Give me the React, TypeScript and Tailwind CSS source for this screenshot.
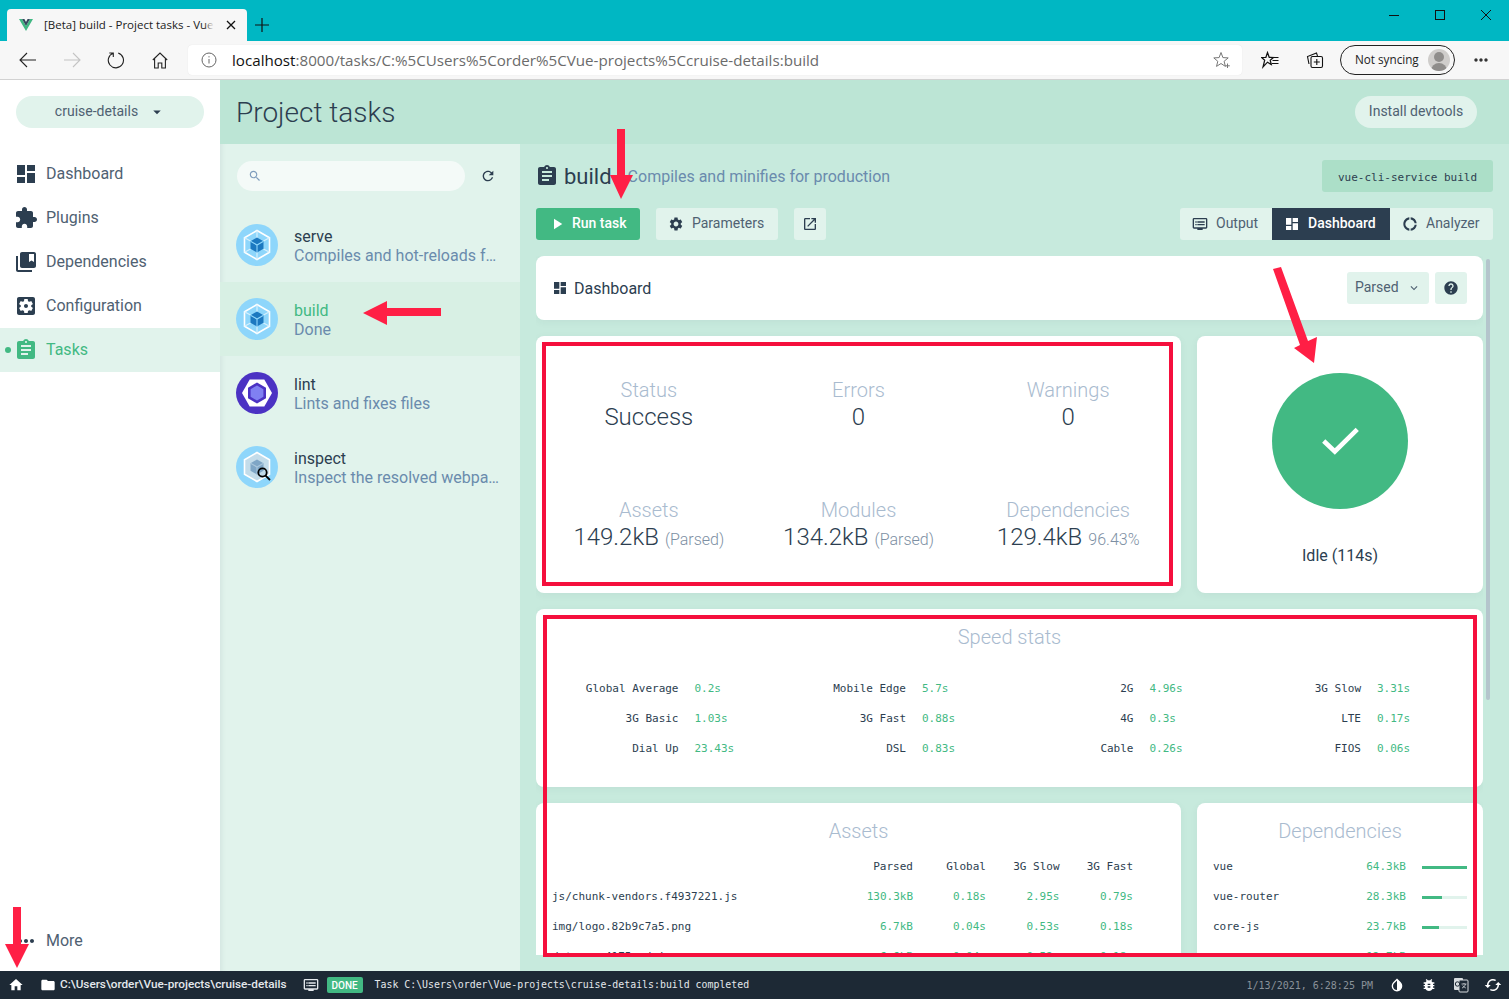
import React from "react";

const P = {
  dashboard: "M3 13h8V3H3v10zm0 8h8v-6H3v6zm10 0h8V11h-8v10zm0-18v6h8V3h-8z",
  extension: "M20.5 11H19V7c0-1.1-.9-2-2-2h-4V3.5C13 2.12 11.88 1 10.5 1S8 2.12 8 3.5V5H4c-1.1 0-1.99.9-1.99 2v3.8H3.5c1.49 0 2.7 1.21 2.7 2.7s-1.21 2.7-2.7 2.7H2V20c0 1.1.9 2 2 2h3.8v-1.5c0-1.49 1.21-2.7 2.7-2.7 1.49 0 2.7 1.21 2.7 2.7V22H17c1.1 0 2-.9 2-2v-4h1.5c1.38 0 2.5-1.12 2.5-2.5S21.88 11 20.5 11z",
  bookmarks: "M4 6H2v14c0 1.1.9 2 2 2h14v-2H4V6zm16-4H8c-1.1 0-2 .9-2 2v12c0 1.1.9 2 2 2h12c1.1 0 2-.9 2-2V4c0-1.1-.9-2-2-2zm0 10l-2.5-1.5L15 12V4h5v8z",
  config: "M12 10c-1.1 0-2 .9-2 2s.9 2 2 2 2-.9 2-2-.9-2-2-2zm7-7H5c-1.1 0-2 .9-2 2v14c0 1.1.9 2 2 2h14c1.1 0 2-.9 2-2V5c0-1.1-.9-2-2-2zm-1.75 9c0 .23-.02.46-.05.68l1.48 1.16c.13.11.17.3.08.45l-1.4 2.42c-.09.15-.27.21-.43.15l-1.74-.7c-.36.28-.76.51-1.18.69l-.26 1.85c-.03.17-.18.3-.35.3h-2.8c-.17 0-.32-.13-.35-.29l-.26-1.85c-.43-.18-.82-.41-1.18-.69l-1.74.7c-.16.06-.34 0-.43-.15l-1.4-2.42c-.09-.15-.05-.34.08-.45l1.48-1.16c-.03-.23-.05-.46-.05-.69 0-.23.02-.46.05-.68l-1.48-1.16c-.13-.11-.17-.3-.08-.45l1.4-2.42c.09-.15.27-.21.43-.15l1.74.7c.36-.28.76-.51 1.18-.69l.26-1.85c.03-.17.18-.3.35-.3h2.8c.17 0 .32.13.35.29l.26 1.85c.43.18.82.41 1.18.69l1.74-.7c.16-.06.34 0 .43.15l1.4 2.42c.09.15.05.34-.08.45l-1.48 1.16c.03.23.05.46.05.69z",
  assignment: "M19 3h-4.18C14.4 1.84 13.3 1 12 1c-1.3 0-2.4.84-2.82 2H5c-1.1 0-2 .9-2 2v14c0 1.1.9 2 2 2h14c1.1 0 2-.9 2-2V5c0-1.1-.9-2-2-2zm-7 0c.55 0 1 .45 1 1s-.45 1-1 1-1-.45-1-1 .45-1 1-1zm2 14H7v-2h7v2zm3-4H7v-2h10v2zm0-4H7V7h10v2z",
  gear: "M19.14 12.94c.04-.3.06-.61.06-.94 0-.32-.02-.64-.07-.94l2.03-1.58c.18-.14.23-.41.12-.61l-1.92-3.32c-.12-.22-.37-.29-.59-.22l-2.39.96c-.5-.38-1.03-.7-1.62-.94l-.36-2.54c-.04-.24-.24-.41-.48-.41h-3.84c-.24 0-.43.17-.47.41l-.36 2.54c-.59.24-1.13.57-1.62.94l-2.39-.96c-.22-.08-.47 0-.59.22L2.74 8.87c-.12.21-.08.47.12.61l2.03 1.58c-.05.3-.09.63-.09.94s.02.64.07.94l-2.03 1.58c-.18.14-.23.41-.12.61l1.92 3.32c.12.22.37.29.59.22l2.39-.96c.5.38 1.03.7 1.62.94l.36 2.54c.05.24.24.41.48.41h3.84c.24 0 .44-.17.47-.41l.36-2.54c.59-.24 1.13-.56 1.62-.94l2.39.96c.22.08.47 0 .59-.22l1.92-3.32c.12-.22.07-.47-.12-.61l-2.01-1.58zM12 15.6c-1.98 0-3.6-1.62-3.6-3.6s1.62-3.6 3.6-3.6 3.6 1.62 3.6 3.6-1.62 3.6-3.6 3.6z",
  open: "M19 19H5V5h7V3H5c-1.11 0-2 .9-2 2v14c0 1.1.89 2 2 2h14c1.1 0 2-.9 2-2v-7h-2v7zM14 3v2h3.59l-9.83 9.83 1.41 1.41L19 6.41V10h2V3h-7z",
  help: "M12 2C6.48 2 2 6.48 2 12s4.48 10 10 10 10-4.48 10-10S17.52 2 12 2zm1 17h-2v-2h2v2zm2.07-7.75l-.9.92C13.45 12.9 13 13.5 13 15h-2v-.5c0-1.1.45-2.1 1.17-2.83l1.24-1.26c.37-.36.59-.86.59-1.41 0-1.1-.9-2-2-2s-2 .9-2 2H8c0-2.21 1.79-4 4-4s4 1.79 4 4c0 .88-.36 1.68-.93 2.25z",
  home: "M10 20v-6h4v6h5v-8h3L12 3 2 12h3v8z",
  folder: "M10 4H4c-1.1 0-1.99.9-1.99 2L2 18c0 1.1.9 2 2 2h16c1.1 0 2-.9 2-2V8c0-1.1-.9-2-2-2h-8l-2-2z",
  bug: "M20 8h-2.81c-.45-.78-1.07-1.45-1.82-1.96L17 4.41 15.59 3l-2.17 2.17C12.96 5.06 12.49 5 12 5c-.49 0-.96.06-1.41.17L8.41 3 7 4.41l1.62 1.63C7.88 6.55 7.26 7.22 6.81 8H4v2h2.09c-.05.33-.09.66-.09 1v1H4v2h2v1c0 .34.04.67.09 1H4v2h2.81c1.04 1.79 2.97 3 5.19 3s4.15-1.21 5.19-3H20v-2h-2.09c.05-.33.09-.66.09-1v-1h2v-2h-2v-1c0-.34-.04-.67-.09-1H20V8zm-6 8h-4v-2h4v2zm0-4h-4v-2h4v2z",
  invert: "M17.66 7.93L12 2.27 6.34 7.93c-3.12 3.12-3.12 8.19 0 11.31C7.9 20.8 9.95 21.58 12 21.58c2.05 0 4.1-.78 5.66-2.34 3.12-3.12 3.12-8.19 0-11.31zM12 19.59c-1.6 0-3.11-.62-4.24-1.76C6.62 16.69 6 15.19 6 13.59s.62-3.11 1.76-4.24L12 5.1v14.49z",
  cached: "M19 8l-4 4h3c0 3.31-2.69 6-6 6-1.01 0-1.97-.25-2.8-.7l-1.46 1.46C8.97 19.54 10.43 20 12 20c4.42 0 8-3.58 8-8h3l-4-4zM6 12c0-3.31 2.69-6 6-6 1.01 0 1.97.25 2.8.7l1.46-1.46C15.03 4.46 13.57 4 12 4c-4.42 0-8 3.58-8 8H1l4 4 4-4H6z",
  refresh: "M17.65 6.35C16.2 4.9 14.21 4 12 4c-4.42 0-7.99 3.58-7.99 8s3.57 8 7.99 8c3.73 0 6.84-2.55 7.73-6h-2.08c-.82 2.33-3.04 4-5.65 4-3.31 0-6-2.69-6-6s2.69-6 6-6c1.66 0 3.14.69 4.22 1.78L13 11h7V4l-2.35 2.35z",
  donut: "M11 5.08V2c-5 .5-9 4.81-9 10s4 9.5 9 10v-3.08c-3-.48-6-3.19-6-6.92s3-6.44 6-6.92zM18.97 11H22c-.47-5-4-8.53-9-9v3.08C16 5.51 18.54 8 18.97 11zM13 18.92V22c5-.47 8.53-4 9-9h-3.03c-.43 3-2.97 5.49-5.97 5.92z",
  dvr: "M21 3H3c-1.1 0-2 .9-2 2v12c0 1.1.9 2 2 2h5v2h8v-2h5c1.1 0 1.99-.9 1.99-2L23 5c0-1.1-.9-2-2-2zm0 14H3V5h18v12zm-2-9H8v2h11V8zm0 4H8v2h11v-2zM7 8H5v2h2V8zm0 4H5v2h2v-2z",
  play: "M8 5v14l11-7z",
  drop: "M7 10l5 5 5-5z",
  expand: "M16.59 8.59L12 13.17 7.41 8.59 6 10l6 6 6-6z",
  search: "M15.5 14h-.79l-.28-.27C15.41 12.59 16 11.11 16 9.5 16 5.91 13.09 3 9.5 3S3 5.91 3 9.5 5.91 16 9.5 16c1.61 0 3.09-.59 4.23-1.57l.27.28v.79l5 4.99L20.49 19l-4.99-5zm-6 0C7.01 14 5 11.99 5 9.5S7.01 5 9.5 5 14 7.01 14 9.5 11.99 14 9.5 14z",
  more: "M6 10c-1.1 0-2 .9-2 2s.9 2 2 2 2-.9 2-2-.9-2-2-2zm12 0c-1.1 0-2 .9-2 2s.9 2 2 2 2-.9 2-2-.9-2-2-2zm-6 0c-1.1 0-2 .9-2 2s.9 2 2 2 2-.9 2-2-.9-2-2-2z",
};

function I({ d, size = 24, className = "" }: { d: string; size?: number; className?: string }) {
  return (
    <svg width={size} height={size} viewBox="0 0 24 24" className={`shrink-0 fill-current ${className}`}>
      <path d={d} />
    </svg>
  );
}

function WebpackIcon({ dim = false, search = false }: { dim?: boolean; search?: boolean }) {
  return (
    <svg width="42" height="42" viewBox="0 0 42 42" className="shrink-0">
      <circle cx="21" cy="21" r="21" fill="#8ed6fb" />
      <path d="M21 6.5 33.5 13.7V28.3L21 35.5 8.5 28.3V13.7Z" fill={dim ? "#c3dcea" : "none"} stroke="#fff" strokeWidth="1.6" />
      {!dim && <path d="M21 6.5V14M33.5 13.7 27.5 17M33.5 28.3 27.5 25M21 35.5V28M8.5 28.3 14.5 25M8.5 13.7 14.5 17" stroke="#d6f0fd" strokeWidth="1.2" />}
      <path d="M21 13.5 27.5 17.2V24.8L21 28.5 14.5 24.8V17.2Z" fill={dim ? "#7fa6c6" : "#1c78c0"} />
      <path d="M14.5 17.2 21 21l6.5-3.8M21 21v7.5" fill="none" stroke={dim ? "#a9c6dc" : "#8ed6fb"} strokeWidth="1.1" />
      {search && (
        <g fill="none" stroke="#000" strokeWidth="1.8">
          <circle cx="26.5" cy="26.5" r="4.2" />
          <path d="M29.6 29.6 34 34" />
        </g>
      )}
    </svg>
  );
}

function EslintIcon() {
  return (
    <svg width="42" height="42" viewBox="0 0 42 42" className="shrink-0">
      <circle cx="21" cy="21" r="21" fill="#4b32c3" />
      <path d="M13.7 7.5H28.3L36 21 28.3 34.5H13.7L6 21Z" fill="#fff" />
      <path d="M21 10.5 30 15.7V26.3L21 31.5 12 26.3V15.7Z" fill="#4b32c3" />
      <path d="M21 13.5 27.4 17.2V24.8L21 28.5 14.6 24.8V17.2Z" fill="#8080f2" />
    </svg>
  );
}

const MONO = "font-['DejaVu_Sans_Mono',monospace]";

const navItems = [
  { label: "Dashboard", d: P.dashboard },
  { label: "Plugins", d: P.extension },
  { label: "Dependencies", d: P.bookmarks },
  { label: "Configuration", d: P.config },
];

function BrowserChrome() {
  return (
    <div className="shrink-0 font-['Open_Sans',sans-serif]">
      <div className="h-[41px] bg-[#00b7c3] flex items-end pl-[7px] relative">
        <div className="w-[240px] h-[32px] bg-[#f7f7f7] rounded-t-[4px] flex items-center pl-[12px] relative">
          <svg width="14" height="12" viewBox="0 0 14 12" className="shrink-0">
            <path d="M0 0h3l4 7 4-7h3L7 12Z" fill="#41b883" />
            <path d="M3 0h2.4L7 3l1.6-3H11L7 7Z" fill="#35495e" />
          </svg>
          <span className="ml-[11px] text-[11.5px] text-[#222] whitespace-nowrap overflow-hidden w-[170px] relative">
            [Beta] build - Project tasks - Vue CLI
            <span className="absolute right-0 top-0 bottom-0 w-[10px] bg-gradient-to-r from-transparent to-[#f7f7f7]" />
          </span>
          <svg width="10" height="10" viewBox="0 0 10 10" className="absolute left-[219px] top-[11px]" fill="none" stroke="#111" strokeWidth="1.3">
            <path d="M1 1l8 8M9 1l-8 8" />
          </svg>
        </div>
        <svg width="14" height="14" viewBox="0 0 14 14" className="ml-[8px] mb-[9px]" fill="none" stroke="#111" strokeWidth="1.2">
          <path d="M7 0v14M0 7h14" />
        </svg>
        <div className="absolute right-0 top-0 h-[30px] flex items-center pr-[18px] gap-[36px]">
          <svg width="10" height="10" viewBox="0 0 10 10" fill="none" stroke="#111"><path d="M0 5.5h10" /></svg>
          <svg width="10" height="10" viewBox="0 0 10 10" fill="none" stroke="#111"><rect x=".5" y=".5" width="9" height="9" /></svg>
          <svg width="10" height="10" viewBox="0 0 10 10" fill="none" stroke="#111"><path d="M0 0l10 10M10 0 0 10" /></svg>
        </div>
      </div>
      <div className="h-[39px] bg-[#f7f7f7] border-b border-[#d2d2d2] flex items-center">
        <div className="w-[188px] relative h-full">
          <svg width="18" height="16" viewBox="0 0 18 16" className="absolute left-[19px] top-[11px]" fill="none" stroke="#222" strokeWidth="1.1"><path d="M17 8H1M8 1 1 8l7 7" /></svg>
          <svg width="18" height="16" viewBox="0 0 18 16" className="absolute left-[63px] top-[11px]" fill="none" stroke="#c4c4c4" strokeWidth="1.1"><path d="M1 8h16M10 1l7 7-7 7" /></svg>
          <svg width="18" height="18" viewBox="0 0 18 18" className="absolute left-[107px] top-[10px]" fill="none" stroke="#222" strokeWidth="1.1"><path d="M6 2.2a7.6 7.6 0 1 0 5.2-.2M6.3 6V2H2.3" /></svg>
          <svg width="16" height="17" viewBox="0 0 16 17" className="absolute left-[152px] top-[11px]" fill="none" stroke="#222" strokeWidth="1.1"><path d="M.8 8 8 1l7.2 7M2.6 6.5V16h3.6v-5h3.6v5h3.6V6.5" /></svg>
        </div>
        <div className="w-[1054px] h-[30px] bg-white rounded-[4px] flex items-center relative shadow-[0_0_1px_rgba(0,0,0,0.12)]">
          <svg width="16" height="16" viewBox="0 0 16 16" className="absolute left-[13px] top-[7px]" fill="none" stroke="#666"><circle cx="8" cy="8" r="7" /><path d="M8 7v4.5M8 4.2v1.2" /></svg>
          <span className="ml-[44px] pt-[1px] text-[15.17px] text-[#6b6b6b] whitespace-nowrap"><span className="text-[#111]">localhost</span>:8000/tasks/C:%5CUsers%5Corder%5CVue-projects%5Ccruise-details:build</span>
          <svg width="18" height="18" viewBox="0 0 18 18" className="absolute right-[11px] top-[6px]" fill="none" stroke="#777"><path d="M8 1.5 9.900 6.600l5.300.3-4.100 3.400 1.300 5.100L8 12.500 3.500 15.400l1.300-5.100L.8 6.900l5.300-.3Z" /><path d="M14.500 12.500v4.500M12.300 14.800h4.500" /></svg>
        </div>
        <div className="flex-1 relative h-full">
          <svg width="18" height="18" viewBox="0 0 18 18" className="absolute left-[19px] top-[10px]" fill="none" stroke="#111" strokeWidth="1.2"><path d="M6.500 1.500 8.200 6.300 12.500 6.500 9.200 9.200 10.300 13.500 6.500 11.200 2 16 3.700 9.200.6 6.500 4.900 6.300Z" /><path d="M11 6.500h6.500M11.500 9.500h6M10.800 12.500h6.700" /></svg>
          <svg width="18" height="18" viewBox="0 0 18 18" className="absolute left-[64px] top-[10px]" fill="none" stroke="#111" strokeWidth="1.1"><path d="M3 13 1.500 5.500 10.500 2l1 3" /><rect x="5" y="5.500" width="11.500" height="11" rx="1.500" fill="#f7f7f7" /><path d="M10.800 8v6M7.800 11h6" /></svg>
          <div className="absolute left-[98px] top-[4px] w-[115px] h-[30px] rounded-full border border-[#222] flex items-center pl-[14px] bg-[#f7f7f7]">
            <span className="text-[11.7px] text-[#222] whitespace-nowrap">Not syncing</span>
            <div className="absolute left-[87px] top-[3px] w-[22px] h-[22px] rounded-full bg-[#cfcdcb] overflow-hidden">
              <div className="w-[10px] h-[10px] rounded-full bg-[#8f8d8b] mx-auto mt-[3px]" />
              <div className="w-[16px] h-[10px] rounded-t-full bg-[#8f8d8b] mx-auto mt-[1px]" />
            </div>
          </div>
          <I d={P.more} size={20} className="absolute left-[229px] top-[9px] text-[#333]" />
        </div>
      </div>
    </div>
  );
}

function Sidebar() {
  return (
    <aside className="w-[220px] shrink-0 bg-white flex flex-col relative">
      <div className="px-[16px] pt-[16px] pb-[24px]">
        <div className="h-[32px] rounded-full bg-[#e1f3ec] flex items-center justify-center text-[14px] text-[#4f6172]">
          <span className="pb-[2px] ml-[1px]">cruise-details</span>
          <I d={P.drop} size={18} className="ml-[10px] text-[#2c3e50]" />
        </div>
      </div>
      {navItems.map((n) => (
        <div key={n.label} className="h-[44px] flex items-center pl-[14px] text-[16px] text-[#4f6172]">
          <I d={n.d} className="text-[#2c3e50]" />
          <span className="ml-[8px]">{n.label}</span>
        </div>
      ))}
      <div className="h-[44px] flex items-center pl-[14px] text-[16px] text-[#42b983] bg-[#e1f3ec] relative">
        <span className="absolute left-[5px] top-[19px] w-[6px] h-[6px] rounded-full bg-[#42b983]" />
        <I d={P.assignment} />
        <span className="ml-[8px]">Tasks</span>
      </div>
      <div className="mt-auto h-[44px] mb-[8px] flex items-center pl-[14px] text-[16px] text-[#4f6172]">
        <I d={P.more} className="text-[#2c3e50]" />
        <span className="ml-[8px]">More</span>
      </div>
    </aside>
  );
}

const tasks = [
  { name: "serve", desc: "Compiles and hot-reloads for development", icon: <WebpackIcon /> },
  { name: "build", desc: "Done", icon: <WebpackIcon />, active: true },
  { name: "lint", desc: "Lints and fixes files", icon: <EslintIcon /> },
  { name: "inspect", desc: "Inspect the resolved webpack config", icon: <WebpackIcon dim search /> },
];

function TaskList() {
  return (
    <div className="w-[300px] shrink-0 bg-[#e1f3ec] flex flex-col shadow-[inset_6px_0_6px_-6px_rgba(44,62,80,0.12)]">
      <div className="h-[64px] flex items-center pl-[17px] pb-[1px]">
        <div className="w-[228px] h-[30px] rounded-full bg-[#f4faf8] flex items-center pl-[11px]">
          <I d={P.search} size={14} className="text-[#7f9dbd]" />
        </div>
        <I d={P.refresh} size={16} className="ml-[15px] text-[#2c3e50]" />
      </div>
      {tasks.map((t) => (
        <div key={t.name} className={`h-[74px] flex items-center pl-[16px] pr-[20px] gap-[16px] ${t.active ? "bg-[#d8f0e4]" : ""}`}>
          {t.icon}
          <div className="min-w-0 flex-1 text-[16px] leading-[19px] pt-[1px]">
            <div className={t.active ? "text-[#42b983]" : "text-[#2c3e50]"}>{t.name}</div>
            <div className="text-[#6a8bad] truncate">{t.desc}</div>
          </div>
        </div>
      ))}
    </div>
  );
}

function Btn({ children, className = "" }: { children: React.ReactNode; className?: string }) {
  return (
    <div className={`h-[32px] rounded-[3px] bg-[#e1f3ec] flex items-center text-[14px] text-[#4f6172] ${className}`}>{children}</div>
  );
}

function Stat({ label, value, extra }: { label: string; value: string; extra?: string }) {
  return (
    <div className="flex flex-col items-center">
      <div className="text-[20px] leading-[26px] font-light text-[#a9bbcf]">{label}</div>
      <div className="text-[24px] leading-[28px] font-light text-[#2c3e50] whitespace-nowrap">
        {value}
        {extra && <span className="text-[16px] text-[#7d8fa3] ml-[6px]">{extra}</span>}
      </div>
    </div>
  );
}

const speeds = [
  ["Global Average", "0.2s"], ["Mobile Edge", "5.7s"], ["2G", "4.96s"], ["3G Slow", "3.31s"],
  ["3G Basic", "1.03s"], ["3G Fast", "0.88s"], ["4G", "0.3s"], ["LTE", "0.17s"],
  ["Dial Up", "23.43s"], ["DSL", "0.83s"], ["Cable", "0.26s"], ["FIOS", "0.06s"],
];

const assets = [
  ["js/chunk-vendors.f4937221.js", "130.3kB", "0.18s", "2.95s", "0.79s"],
  ["img/logo.82b9c7a5.png", "6.7kB", "0.04s", "0.53s", "0.18s"],
  ["data.eca4175ecd.js", "6.6kB", "0.04s", "0.52s", "0.18s"],
];

const deps = [
  ["vue", "64.3kB", 100],
  ["vue-router", "28.3kB", 44],
  ["core-js", "23.7kB", 38],
  ["acorn", "12.7kB", 20],
] as const;

function Card({ children, className = "" }: { children: React.ReactNode; className?: string }) {
  return <div className={`bg-white rounded-[8px] shadow-[0_2px_8px_rgba(44,62,80,0.05)] ${className}`}>{children}</div>;
}

function Detail() {
  return (
    <div className="flex-1 min-w-0 bg-[#c7eadd] flex flex-col px-[16px] pt-[16px] pb-[16px] relative">
      <div className="h-[32px] flex items-center shrink-0">
        <I d={P.assignment} className="text-[#2c3e50] -ml-[1px]" />
        <span className="ml-[5px] text-[22px] text-[#2c3e50]">build</span>
        <span className="ml-[16px] pt-[2px] text-[16px] text-[#6a8bad]">Compiles and minifies for production</span>
        <div className={`ml-auto h-[32px] w-[171px] rounded-[3px] bg-[#acdfc8] flex items-center justify-center pt-[4px] text-[11px] text-[#2c3e50] ${MONO}`}>vue-cli-service build</div>
      </div>
      <div className="h-[32px] mt-[16px] flex shrink-0">
        <div className="h-[32px] w-[104px] rounded-[3px] bg-[#42b983] flex items-center pl-[12px] text-[14px] text-white font-medium">
          <I d={P.play} size={18} />
          <span className="ml-[6px] pb-[2px]">Run task</span>
        </div>
        <Btn className="w-[122px] ml-[16px] pl-[12px]">
          <I d={P.gear} size={16} className="text-[#2c3e50]" />
          <span className="ml-[8px] pb-[2px]">Parameters</span>
        </Btn>
        <Btn className="w-[32px] ml-[16px] justify-center">
          <I d={P.open} size={16} className="text-[#2c3e50]" />
        </Btn>
        <div className="ml-auto flex h-[32px] rounded-[3px] overflow-hidden bg-[#e1f3ec] text-[14px] text-[#4f6172]">
          <div className="w-[92px] flex items-center pl-[12px]">
            <I d={P.dvr} size={16} className="text-[#2c3e50]" />
            <span className="ml-[8px] pb-[2px]">Output</span>
          </div>
          <div className="w-[118px] flex items-center pl-[12px] bg-[#2c3e50] text-white font-medium">
            <I d={P.dashboard} size={16} />
            <span className="ml-[8px] pb-[2px]">Dashboard</span>
          </div>
          <div className="w-[103px] flex items-center pl-[12px]">
            <I d={P.donut} size={16} className="text-[#2c3e50]" />
            <span className="ml-[8px] pb-[2px]">Analyzer</span>
          </div>
        </div>
      </div>

      <div className="absolute right-[19px] top-[115px] w-[4px] h-[441px] rounded-full bg-[#b4c5cc]" />

      <div className="mt-[16px] flex-1 min-h-0 overflow-hidden mr-[10px] flex flex-col gap-[16px]">
        <Card className="h-[64px] shrink-0 flex items-center pl-[16px] pr-[16px]">
          <I d={P.dashboard} size={16} className="text-[#2c3e50]" />
          <span className="ml-[6px] pt-[2px] text-[16px] text-[#2c3e50]">Dashboard</span>
          <div className="ml-auto h-[32px] w-[82px] rounded-[3px] bg-[#e1f3ec] flex items-center pl-[8px] text-[14px] text-[#4f6172]">
            <span className="pb-[2px]">Parsed</span>
            <I d={P.expand} size={14} className="ml-[8px] text-[#4f6172]" />
          </div>
          <div className="ml-[6px] h-[32px] w-[32px] rounded-[3px] bg-[#e1f3ec] flex items-center justify-center">
            <I d={P.help} size={16} className="text-[#2c3e50]" />
          </div>
        </Card>

        <div className="flex gap-[16px] shrink-0">
          <Card className="w-[645px] h-[257px] shrink-0 grid grid-cols-3 content-start px-[8px] pt-[41px]">
            <Stat label="Status" value="Success" />
            <Stat label="Errors" value="0" />
            <Stat label="Warnings" value="0" />
            <div className="mt-[66px]"><Stat label="Assets" value="149.2kB" extra="(Parsed)" /></div>
            <div className="mt-[66px]"><Stat label="Modules" value="134.2kB" extra="(Parsed)" /></div>
            <div className="mt-[66px]"><Stat label="Dependencies" value="129.4kB" extra="96.43%" /></div>
          </Card>
          <Card className="flex-1 h-[257px] flex flex-col items-center pt-[37px]">
            <div className="w-[136px] h-[136px] rounded-full bg-[#42b983] flex items-center justify-center">
              <svg width="46" height="46" viewBox="0 0 24 24" fill="none" stroke="#fff" strokeWidth="2.4" className="-mt-[2px] -ml-[1px]"><path d="M3.5 12.5 9.300 18 21 6.500" /></svg>
            </div>
            <div className="mt-[37px] text-[16px] leading-[19px] text-[#2c3e50]">Idle (114s)</div>
          </Card>
        </div>

        <Card className="h-[178px] shrink-0 pt-[15px]">
          <div className="text-center text-[20px] leading-[26px] font-light text-[#a9bbcf]">Speed stats</div>
          <div className={`mx-auto w-[910px] mt-[24px] grid grid-cols-4 text-[11px] ${MONO}`}>
            {speeds.map(([k, v]) => (
              <div key={k} className="h-[30px] flex items-center">
                <span className="w-[124px] text-right text-[#2c3e50] whitespace-pre">{k}</span>
                <span className="ml-[16px] text-[#42b983]">{v}</span>
              </div>
            ))}
          </div>
        </Card>

        <div className="flex gap-[16px] shrink-0">
          <Card className="w-[645px] shrink-0 pt-[15px] pl-[16px] pr-[48px] pb-[16px]">
            <div className="text-center text-[20px] leading-[26px] font-light text-[#a9bbcf] ml-[32px]">Assets</div>
            <div className={`mt-[8px] text-[11px] ${MONO}`}>
              <div className="h-[30px] grid grid-cols-[1fr_73px_73px_73.5px_73.5px] items-center text-right text-[#2c3e50]">
                <span />
                <span>Parsed</span>
                <span>Global</span>
                <span>3G Slow</span>
                <span>3G Fast</span>
              </div>
              {assets.map((r) => (
                <div key={r[0]} className="h-[30px] grid grid-cols-[1fr_73px_73px_73.5px_73.5px] items-center text-right text-[#42b983]">
                  <span className="text-left text-[#2c3e50] whitespace-nowrap">{r[0]}</span>
                  <span>{r[1]}</span>
                  <span>{r[2]}</span>
                  <span>{r[3]}</span>
                  <span>{r[4]}</span>
                </div>
              ))}
            </div>
          </Card>
          <Card className="flex-1 pt-[15px] px-[16px] pb-[16px]">
            <div className="text-center text-[20px] leading-[26px] font-light text-[#a9bbcf]">Dependencies</div>
            <div className={`mt-[8px] text-[11px] ${MONO}`}>
              {deps.map(([n, s, pct]) => (
                <div key={n} className="h-[30px] flex items-center">
                  <span className="flex-1 text-[#2c3e50]">{n}</span>
                  <span className="text-[#42b983]">{s}</span>
                  <div className="ml-[16px] w-[45px] h-[3px] bg-[#e1f3ec]">
                    <div className="h-full bg-[#42b983]" style={{ width: `${pct}%` }} />
                  </div>
                </div>
              ))}
            </div>
          </Card>
        </div>
      </div>
    </div>
  );
}

function StatusBar() {
  return (
    <div className="h-[28px] shrink-0 bg-[#1d2935] flex items-center text-white relative">
      <I d={P.home} size={16} className="ml-[8px]" />
      <I d={P.folder} size={16} className="ml-[16px]" />
      <span className="ml-[4px] text-[11.75px] font-['Roboto',sans-serif] font-medium text-[#e4e8ec] whitespace-nowrap">C:\Users\order\Vue-projects\cruise-details</span>
      <I d={P.dvr} size={16} className="ml-[16px] text-[#e4e8ec]" />
      <span className="ml-[8px] h-[16px] w-[36px] rounded-[2px] bg-[#42b983] flex items-center justify-center text-[10px] font-['Roboto',sans-serif] font-medium">DONE</span>
      <span className={`ml-[12px] text-[9.88px] text-[#e4e8ec] whitespace-nowrap ${MONO}`}>Task C:\Users\order\Vue-projects\cruise-details:build completed</span>
      <span className={`ml-auto text-[10px] text-[#8a929a] whitespace-nowrap ${MONO}`}>1/13/2021, 6:28:25 PM</span>
      <I d={P.invert} size={16} className="ml-[16px]" />
      <I d={P.bug} size={16} className="ml-[16px]" />
      <svg width="16" height="16" viewBox="0 0 16 16" className="ml-[16px] shrink-0">
        <rect x="1" y="1" width="9" height="12" rx="1" fill="#d8dcdf" />
        <rect x="6" y="3" width="9" height="12" rx="1" fill="#1d2935" stroke="#d8dcdf" />
        <circle cx="4.500" cy="7" r="2.200" fill="none" stroke="#1d2935" />
        <path d="M8.500 7h5M11 6v1M12.500 7c-.5 2-2 3.500-3.500 4M9.800 8.500c.7 1 1.800 2 3 2.500" fill="none" stroke="#d8dcdf" strokeWidth=".8" />
      </svg>
      <I d={P.cached} size={18} className="ml-[15px] mr-[7px]" />
    </div>
  );
}

function Annotations() {
  return (
    <>
      <div className="absolute left-[542px] top-[342px] w-[631px] h-[244px] border-[4px] border-[#f50f3d] pointer-events-none" />
      <div className="absolute left-[543px] top-[615px] w-[934px] h-[342px] border-[4px] border-[#f50f3d] pointer-events-none" />
      <svg width="1509" height="999" viewBox="0 0 1509 999" className="absolute left-0 top-0 pointer-events-none" fill="#ff1f45">
        <polygon points="617,129 625,129 625,175 633,175 621,199 610,175 617,175" />
        <polygon points="363,313 387,301 387,308 441,308 441,316 387,316 387,325" />
        <polygon points="1273,269 1281,267 1308,341 1317,337 1314,363 1294,348 1300,345" />
        <polygon points="13,907 21,907 21,944 29,944 17,968 5,944 13,944" />
      </svg>
    </>
  );
}

export default function App() {
  return (
    <div className="relative w-[1509px] h-[999px] overflow-hidden flex flex-col bg-white font-['Roboto',sans-serif]">
      <BrowserChrome />
      <div className="flex-1 min-h-0 flex">
        <Sidebar />
        <div className="flex-1 min-w-0 flex flex-col">
          <div className="h-[64px] shrink-0 bg-[#bce5d5] flex items-center pl-[16px] pr-[32px]">
            <span className="text-[28px] font-light text-[#2c3e50] pt-[2px]">Project tasks</span>
            <div className="ml-auto h-[32px] w-[122px] rounded-full bg-[#e1f3ec] flex items-center justify-center text-[14px] text-[#4f6172] pb-[2px]">Install devtools</div>
          </div>
          <div className="flex-1 min-h-0 flex">
            <TaskList />
            <Detail />
          </div>
        </div>
      </div>
      <StatusBar />
      <Annotations />
    </div>
  );
}
